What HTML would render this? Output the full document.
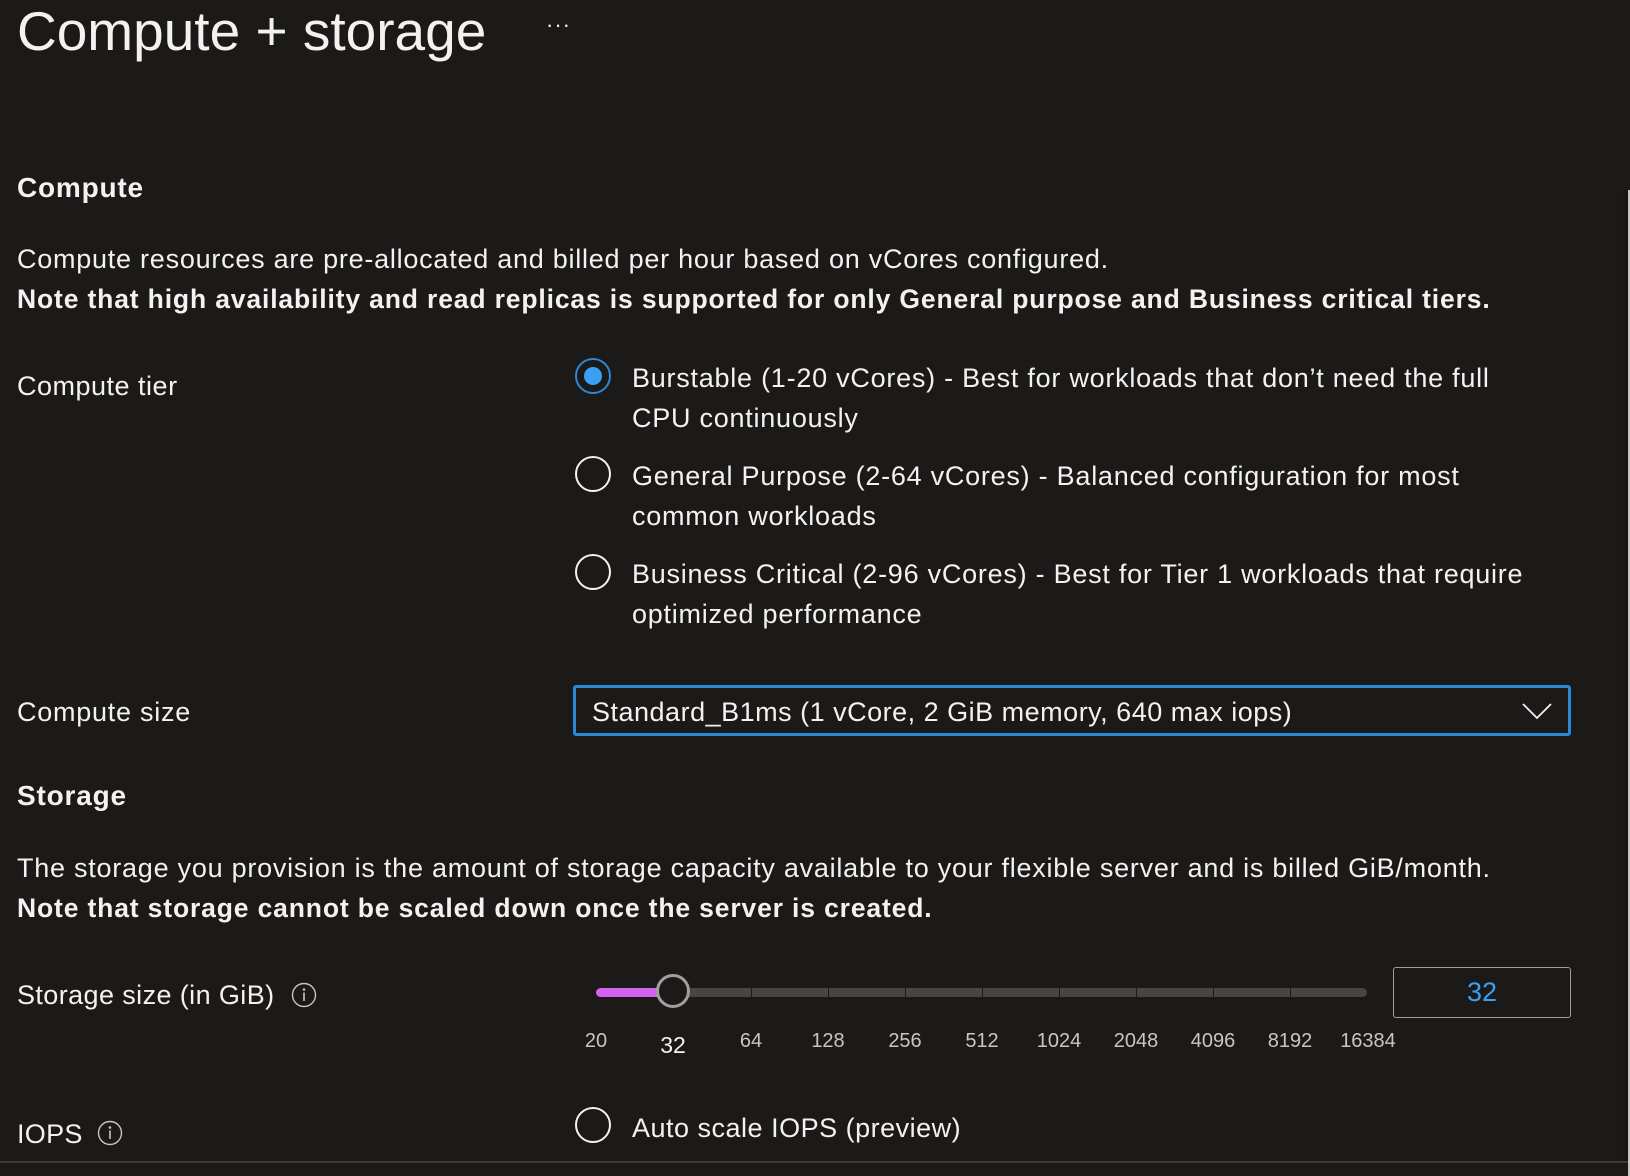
<!DOCTYPE html>
<html><head><meta charset="utf-8">
<style>
html,body{margin:0;padding:0;}
body{width:1630px;height:1176px;background:#1b1a19;color:#f3f2f1;font-family:"Liberation Sans",sans-serif;position:relative;overflow:hidden;}
.a{position:absolute;white-space:nowrap;line-height:1;}
.t{font-size:27px;letter-spacing:0.75px;}
.b{font-weight:bold;}
.nb{font-size:26.5px;letter-spacing:0.85px;}
.radio{position:absolute;width:36px;height:36px;border:2px solid #f3f2f1;border-radius:50%;box-sizing:border-box;}
.lbl{position:absolute;font-size:20px;color:#c8c6c4;transform:translateX(-50%);top:1030px;}
.seg{position:absolute;top:988px;height:9px;background:#484644;}
</style></head><body>
<div class="a" style="left:17px;top:4px;font-size:55px;">Compute + storage</div>
<div class="a" style="left:546px;top:14px;font-size:22px;letter-spacing:1px;">···</div>

<div class="a b" style="left:17px;top:174px;font-size:28px;letter-spacing:0.8px;">Compute</div>
<div class="a t" style="left:17px;top:246px;">Compute resources are pre-allocated and billed per hour based on vCores configured.</div>
<div class="a b nb" style="left:17px;top:286px;">Note that high availability and read replicas is supported for only General purpose and Business critical tiers.</div>

<div class="a t" style="left:17px;top:373px;letter-spacing:0.5px;">Compute tier</div>

<div class="radio" style="left:575px;top:358px;border-color:#2b88d8;"><div style="position:absolute;left:7px;top:7px;width:18px;height:18px;border-radius:50%;background:#3aa0f3;"></div></div>
<div class="a t" style="left:632px;top:365px;">Burstable (1-20 vCores) - Best for workloads that don’t need the full</div>
<div class="a t" style="left:632px;top:405px;">CPU continuously</div>

<div class="radio" style="left:575px;top:456px;"></div>
<div class="a t" style="left:632px;top:463px;">General Purpose (2-64 vCores) - Balanced configuration for most</div>
<div class="a t" style="left:632px;top:503px;">common workloads</div>

<div class="radio" style="left:575px;top:554px;"></div>
<div class="a t" style="left:632px;top:561px;">Business Critical (2-96 vCores) - Best for Tier 1 workloads that require</div>
<div class="a t" style="left:632px;top:601px;">optimized performance</div>

<div class="a t" style="left:17px;top:699px;">Compute size</div>
<div style="position:absolute;left:573px;top:685px;width:998px;height:51px;border:3px solid #2b88d8;border-radius:3px;box-sizing:border-box;"></div>
<div class="a t" style="left:592px;top:699px;letter-spacing:0.5px;">Standard_B1ms (1 vCore, 2 GiB memory, 640 max iops)</div>
<svg style="position:absolute;left:1522px;top:702px" width="30" height="18" viewBox="0 0 30 18"><path d="M1 2 L15 16 L29 2" fill="none" stroke="#f3f2f1" stroke-width="1.8"/></svg>

<div class="a b" style="left:17px;top:782px;font-size:28px;letter-spacing:0.8px;">Storage</div>
<div class="a t" style="left:17px;top:855px;">The storage you provision is the amount of storage capacity available to your flexible server and is billed GiB/month.</div>
<div class="a b nb" style="left:17px;top:895px;">Note that storage cannot be scaled down once the server is created.</div>

<div class="a t" style="left:17px;top:982px;letter-spacing:0.4px;">Storage size (in GiB)</div>
<svg style="position:absolute;left:291px;top:982px" width="26" height="26" viewBox="0 0 26 26"><circle cx="13" cy="13" r="11.5" fill="none" stroke="#c8c6c4" stroke-width="1.4"/><circle cx="13" cy="7.5" r="1.3" fill="#c8c6c4"/><rect x="12.2" y="10.5" width="1.6" height="8.5" fill="#c8c6c4"/></svg>

<div style="position:absolute;left:596px;top:988px;width:80px;height:9px;background:#d462f0;border-radius:5px;"></div>
<div class="seg" style="left:676px;width:75px;"></div>
<div class="seg" style="left:752px;width:76px;"></div>
<div class="seg" style="left:829px;width:76px;"></div>
<div class="seg" style="left:906px;width:76px;"></div>
<div class="seg" style="left:983px;width:76px;"></div>
<div class="seg" style="left:1060px;width:76px;"></div>
<div class="seg" style="left:1137px;width:76px;"></div>
<div class="seg" style="left:1214px;width:76px;"></div>
<div class="seg" style="left:1291px;width:76px;border-radius:0 5px 5px 0;"></div>
<div style="position:absolute;left:656px;top:974px;width:34px;height:34px;border-radius:50%;border:3px solid #a19f9d;background:#1b1a19;box-sizing:border-box;"></div>
<div style="position:absolute;left:1393px;top:967px;width:178px;height:51px;border:1.5px solid #a19f9d;border-radius:3px;box-sizing:border-box;"></div>
<div class="a" style="left:1482px;top:979px;font-size:27px;color:#3aa0f3;transform:translateX(-50%);">32</div>

<div class="lbl" style="left:596px;">20</div>
<div class="lbl" style="left:673px;top:1032px;font-size:23px;color:#f3f2f1;">32</div>
<div class="lbl" style="left:751px;">64</div>
<div class="lbl" style="left:828px;">128</div>
<div class="lbl" style="left:905px;">256</div>
<div class="lbl" style="left:982px;">512</div>
<div class="lbl" style="left:1059px;">1024</div>
<div class="lbl" style="left:1136px;">2048</div>
<div class="lbl" style="left:1213px;">4096</div>
<div class="lbl" style="left:1290px;">8192</div>
<div class="lbl" style="left:1368px;">16384</div>

<div class="a t" style="left:17px;top:1121px;letter-spacing:0.3px;">IOPS</div>
<svg style="position:absolute;left:97px;top:1120px" width="26" height="26" viewBox="0 0 26 26"><circle cx="13" cy="13" r="11.5" fill="none" stroke="#c8c6c4" stroke-width="1.4"/><circle cx="13" cy="7.5" r="1.3" fill="#c8c6c4"/><rect x="12.2" y="10.5" width="1.6" height="8.5" fill="#c8c6c4"/></svg>
<div class="radio" style="left:575px;top:1107px;"></div>
<div class="a t" style="left:632px;top:1115px;letter-spacing:0.5px;">Auto scale IOPS (preview)</div>

<div style="position:absolute;left:0;top:1161px;width:1630px;height:2px;background:#3b3a39;"></div>
<div style="position:absolute;left:1622px;top:190px;width:6px;height:971px;background:linear-gradient(to right,#1b1a19,#141312);"></div>
<div style="position:absolute;left:1628px;top:190px;width:2px;height:986px;background:#c8c6c4;"></div>
</body></html>
